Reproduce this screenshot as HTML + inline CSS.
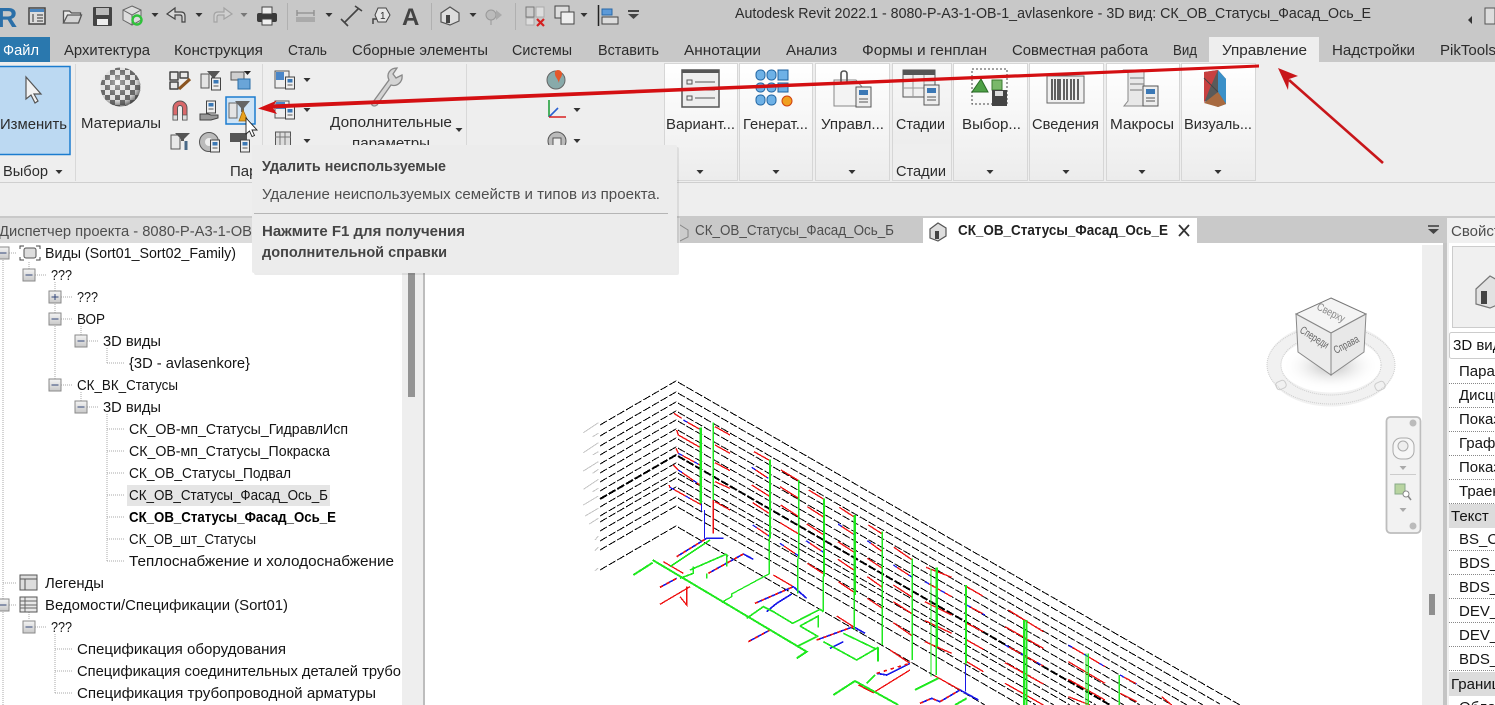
<!DOCTYPE html>
<html lang="ru"><head><meta charset="utf-8"><title>Autodesk Revit</title>
<style>
html,body{margin:0;padding:0;background:#fff;overflow:hidden}
svg{display:block}
text{font-family:"Liberation Sans","DejaVu Sans",sans-serif;font-size:15px;fill:#2c2c2c}
.t text,text.d{fill:#141414}
.b{font-weight:bold}
.g{fill:#4e4e4e}
.w{stroke:#000;stroke-width:1;stroke-dasharray:8 2;fill:none}
.tri{fill:#333}
</style></head><body>
<svg width="1495" height="705" viewBox="0 0 1495 705" xmlns="http://www.w3.org/2000/svg">
<defs>
<linearGradient id="pn" x1="0" y1="0" x2="0" y2="1"><stop offset="0" stop-color="#fff"/><stop offset="1" stop-color="#ececec"/></linearGradient>
<linearGradient id="bx" x1="0" y1="0" x2="0" y2="1"><stop offset="0" stop-color="#f4f4f4"/><stop offset="1" stop-color="#c8c8c8"/></linearGradient>
<radialGradient id="sph" cx=".42" cy=".38" r=".62"><stop offset="0" stop-color="#fff" stop-opacity=".5"/><stop offset=".7" stop-color="#aaa" stop-opacity=".2"/><stop offset="1" stop-color="#444" stop-opacity=".75"/></radialGradient>
<radialGradient id="shd"><stop offset="0" stop-color="#bbb"/><stop offset="1" stop-color="#fff" stop-opacity="0"/></radialGradient>
<pattern id="chk" width="10" height="10" patternUnits="userSpaceOnUse"><rect width="10" height="10" fill="#f0f0f0"/><rect width="5" height="5" fill="#555"/><rect x="5" y="5" width="5" height="5" fill="#555"/></pattern>
<g id="doc"><rect x="-7" y="-10" width="15" height="20" fill="#eee" stroke="#555"/><rect x="-4" y="-7" width="9" height="5" fill="#3b78b5"/><path d="M-4 2h9M-4 5h9" stroke="#555"/></g>
<g id="sd"><rect x="-4.500" y="-6" width="9" height="12" fill="#eee" stroke="#444"/><rect x="-2.500" y="-4" width="5" height="3.500" fill="#3b78b5"/><path d="M-2.500 2h5" stroke="#555"/></g>
<g id="bplus"><rect x="-6" y="-6" width="12" height="12" fill="url(#bx)" stroke="#8a8a8a"/><path d="M-3.500 0h7" stroke="#33477a"/></g>
<path id="dn" d="M-3.500 -2h7L0 2z"/>
</defs>

<!-- base -->
<rect width="1495" height="705" fill="#fff"/>
<rect width="1495" height="62" fill="#c8c8c8"/>
<rect y="62" width="1495" height="154" fill="#eee"/>
<rect y="182" width="1495" height="1" fill="#cfcfcf"/>
<rect y="216" width="1495" height="27" fill="#c9c9c9"/>

<!-- Quick access -->
<text x="-3" y="27" style="font-size:28px;font-weight:bold;fill:#2b6fa8">R</text>
<rect x="29" y="8" width="16" height="16" fill="#ddd" stroke="#444" stroke-width="1.500"/><rect x="30" y="9" width="14" height="3" fill="#4a86c0"/><path d="M33 14v8M37 15h6M37 18h6M37 21h6" stroke="#333"/>
<path d="M63.500 23V11h6l2 2h9v3" fill="#e8e8e8" stroke="#555" stroke-width="1.300"/><path d="M63.500 23l4-8h14l-3 8z" fill="#d4d4d4" stroke="#555" stroke-width="1.300"/>
<rect x="93" y="7" width="19" height="19" fill="#444" rx="1"/><rect x="96" y="8" width="13" height="7" fill="#bbb"/><rect x="97" y="19" width="11" height="6" fill="#eee"/>
<path d="M132 6l9 4v10l-9 5-9-5V10z" fill="#ddd" stroke="#666"/><path d="M123 10l9 5 9-5M132 15v10" stroke="#666" fill="none"/><circle cx="137" cy="20" r="4.500" fill="none" stroke="#2fc23a" stroke-width="2.400"/>
<use href="#dn" x="155" y="15" fill="#333"/>
<path d="M167 14l8-6v4h6q4 0 4 4v6h-3v-5q0-2-2-2h-5v4z" fill="#d6d6d6" stroke="#444" stroke-width="1.200"/>
<use href="#dn" x="199" y="15" fill="#333"/>
<path d="M232 14l-8-6v4h-6q-4 0-4 4v6h3v-5q0-2 2-2h5v4z" fill="#d0d0d0" stroke="#a3a3a3" stroke-width="1.200"/>
<use href="#dn" x="244" y="15" fill="#777"/>
<rect x="257" y="13" width="20" height="9" rx="2" fill="#3a3a3a"/><rect x="262" y="7" width="10" height="7" fill="#eee" stroke="#444"/><rect x="262" y="19" width="10" height="6" fill="#f0f0f0" stroke="#444"/>
<rect x="287" y="3" width="1" height="27" fill="#b0b0b0"/>
<path d="M297 13h17M297 10v6M314 10v6" stroke="#8d8d8d" fill="none" stroke-width="1.300"/><rect x="296" y="17" width="19" height="5" fill="#aaa"/>
<use href="#dn" x="329" y="15" fill="#333"/>
<path d="M344 23l15-15M341 19l7 7M355 6l7 5" stroke="#444" stroke-width="1.600" fill="none"/>
<path d="M373 24v-5h4" stroke="#444" stroke-width="1.500" fill="none"/><path d="M378 8h8l4 7-4 7h-8l-3-7z" fill="#e6e6e6" stroke="#444"/><text x="380" y="19" style="font-size:10px">1</text>
<text x="402" y="25" style="font-size:24px;font-weight:bold;fill:#444">A</text>
<rect x="431" y="3" width="1" height="27" fill="#b0b0b0"/>
<path d="M441 13l9-6 9 6v8l-9 4-9-3z" fill="#ddd" stroke="#555" stroke-width="1.200"/><rect x="446" y="15" width="4" height="8" fill="#444"/>
<use href="#dn" x="473" y="15" fill="#333"/>
<circle cx="491" cy="15" r="5" fill="#bbb" stroke="#999"/><path d="M496 10l6 5-6 5" fill="#aaa"/><path d="M491 20v5" stroke="#999"/>
<rect x="515" y="3" width="1" height="27" fill="#b0b0b0"/>
<rect x="526" y="7" width="8" height="10" fill="#ccc" stroke="#777"/><rect x="536" y="7" width="8" height="10" fill="#ddd" stroke="#aaa"/><rect x="526" y="18" width="8" height="7" fill="#ddd" stroke="#aaa"/><path d="M537 19l7 7M544 19l-7 7" stroke="#d42020" stroke-width="2.200"/>
<rect x="555" y="6" width="14" height="12" fill="#ddd" stroke="#444"/><rect x="561" y="12" width="13" height="12" fill="#eee" stroke="#444"/>
<use href="#dn" x="584" y="15" fill="#333"/>
<path d="M598.500 5v21" stroke="#222" stroke-width="1.500"/><rect x="602" y="9" width="10" height="6" fill="#5d9ad8" stroke="#2868a8"/><rect x="602" y="17" width="16" height="7" fill="#ddd" stroke="#444"/>
<path d="M628 11h11" stroke="#444" stroke-width="2"/><path d="M628 14h11l-5.500 5z" fill="#444"/>

<text x="735" y="18" textLength="636" lengthAdjust="spacingAndGlyphs">Autodesk Revit 2022.1 - 8080-Р-А3-1-ОВ-1_avlasenkore - 3D вид: СК_ОВ_Статусы_Фасад_Ось_Е</text>
<path d="M1472 16l-4 4 4 4z" fill="#333"/><rect x="1485" y="8" width="10" height="16" fill="#ddd" stroke="#555"/>

<!-- tabs -->
<rect y="37" width="50" height="25" fill="#2a78ae"/>
<text x="3" y="55" textLength="36" lengthAdjust="spacingAndGlyphs" style="fill:#fff">Файл</text>
<rect x="1209" y="37" width="110" height="25" fill="#eee"/>
<text x="64" y="55" textLength="86" lengthAdjust="spacingAndGlyphs">Архитектура</text>
<text x="174" y="55" textLength="89" lengthAdjust="spacingAndGlyphs">Конструкция</text>
<text x="288" y="55" textLength="39" lengthAdjust="spacingAndGlyphs">Сталь</text>
<text x="352" y="55" textLength="136" lengthAdjust="spacingAndGlyphs">Сборные элементы</text>
<text x="512" y="55" textLength="60" lengthAdjust="spacingAndGlyphs">Системы</text>
<text x="598" y="55" textLength="61" lengthAdjust="spacingAndGlyphs">Вставить</text>
<text x="684" y="55" textLength="77" lengthAdjust="spacingAndGlyphs">Аннотации</text>
<text x="786" y="55" textLength="51" lengthAdjust="spacingAndGlyphs">Анализ</text>
<text x="862" y="55" textLength="125" lengthAdjust="spacingAndGlyphs">Формы и генплан</text>
<text x="1012" y="55" textLength="136" lengthAdjust="spacingAndGlyphs">Совместная работа</text>
<text x="1173" y="55" textLength="24" lengthAdjust="spacingAndGlyphs">Вид</text>
<text x="1222" y="55" textLength="85" lengthAdjust="spacingAndGlyphs">Управление</text>
<text x="1332" y="55" textLength="83" lengthAdjust="spacingAndGlyphs">Надстройки</text>
<text x="1440" y="55" textLength="56" lengthAdjust="spacingAndGlyphs">PikTools</text>

<!-- ribbon left -->
<rect x="-2" y="66.500" width="72" height="88" fill="#bcd9f2" stroke="#1b7ccf" stroke-width="1.500"/>
<path d="M26 77v22l5-4 4 8 3-2-4-7h7z" fill="#f2f2f2" stroke="#555" stroke-width="1.200"/>
<text x="0" y="129" textLength="67" lengthAdjust="spacingAndGlyphs">Изменить</text>
<text x="3" y="176" textLength="45" lengthAdjust="spacingAndGlyphs">Выбор</text>
<use href="#dn" x="59" y="172" class="tri"/>
<rect x="75" y="64" width="1" height="117" fill="#d8d8d8"/>
<rect x="262" y="64" width="1" height="117" fill="#d8d8d8"/>
<rect x="466" y="64" width="1" height="117" fill="#d8d8d8"/>
<ellipse cx="120.500" cy="87" rx="20" ry="19.500" fill="url(#chk)"/>
<ellipse cx="120.500" cy="87" rx="20" ry="19.500" fill="url(#sph)"/>
<text x="81" y="128" textLength="80" lengthAdjust="spacingAndGlyphs">Материалы</text>

<!-- small icons row 1 -->
<path d="M170 72h8v8h-8zM180 72h8v6h-8zM170 82h8v7h-8z" fill="#e8e8e8" stroke="#444" stroke-width="1.500" stroke-linejoin="round"/><path d="M179 89l11-10" stroke="#8a5420" stroke-width="3.200"/>
<path d="M201 74h8v14h-8z" fill="#e4e4e4" stroke="#555"/><path d="M207 71h13l-5 6v2h-3v-2z" fill="#555"/><use href="#sd" x="216" y="84"/>
<path d="M231 72h13v8h-13z" fill="#cfcfcf" stroke="#555"/><rect x="238" y="79" width="12" height="10" fill="#6aa5d8" stroke="#2a6ea8"/><path d="M244 71h7l-3.500 4z" fill="#222"/>
<!-- row 2 -->
<path d="M173 120v-12a7 7 0 0 1 14 0v12h-4.500v-12a2.500 2.500 0 0 0-5 0v12z" fill="#d9686a" stroke="#555"/><rect x="173" y="115" width="4.500" height="5" fill="#ddd" stroke="#555" stroke-width=".7"/><rect x="182.500" y="115" width="4.500" height="5" fill="#ddd" stroke="#555" stroke-width=".7"/>
<use href="#sd" x="211" y="107"/><path d="M200 114h8l3 1h7v3l-7 2h-11z" fill="#999" stroke="#444"/>
<rect x="226" y="97" width="29" height="27" fill="#cfe4f6" stroke="#1b7ccf" stroke-width="1.500"/>
<path d="M229 103h8v15h-8z" fill="#e4e4e4" stroke="#666"/><path d="M235 101h15l-6 7v4h-3v-4z" fill="#666"/><path d="M243 110l5 11h-9z" fill="#e9a21c" stroke="#a36a10" stroke-width=".8"/>
<!-- row 3 -->
<path d="M171 135h9v14h-9z" fill="#e8e8e8" stroke="#555"/><path d="M175 133h15l-6 6v2h-3v-2z" fill="#555"/><path d="M186 141v9" stroke="#4a6a88" stroke-width="3"/>
<circle cx="209" cy="142" r="9.500" fill="#bbb" stroke="#555"/><circle cx="209" cy="142" r="4" fill="#eee"/><use href="#sd" x="215" y="146"/>
<rect x="230" y="133" width="17" height="9" fill="#555"/><use href="#sd" x="245" y="146"/>
<!-- column 2 -->
<rect x="275" y="71" width="14" height="17" fill="#eee" stroke="#555"/><rect x="276" y="72" width="8" height="8" fill="#4a86c8"/><use href="#sd" x="290" y="83"/><use href="#dn" x="307" y="80" class="tri"/>
<rect x="275" y="101" width="14" height="17" fill="#eee" stroke="#555"/><rect x="276" y="102" width="9" height="7" fill="#4a86c8"/><use href="#sd" x="290" y="113"/><use href="#dn" x="307" y="110" class="tri"/>
<rect x="275.500" y="132" width="15" height="14" fill="#ddd" stroke="#555"/><path d="M275 137h16M280 132v14M285 132v14" stroke="#777"/><use href="#dn" x="307" y="141" class="tri"/>
<path d="M373 102l16-22c-3-6 1-12 8-12l-4 6 3 4 6-3c1 7-5 12-11 10l-14 20q-3 2-5 0-1-2 1-3z" fill="#d4d4d4" stroke="#888" stroke-width="1.300"/>
<text x="330" y="127" textLength="122" lengthAdjust="spacingAndGlyphs">Дополнительные</text>
<text x="352" y="148" textLength="78" lengthAdjust="spacingAndGlyphs">параметры</text>
<use href="#dn" x="459" y="130" class="tri"/>
<circle cx="556" cy="80" r="9" fill="#8aa" stroke="#666"/><path d="M558 70a4 4 0 0 1 4 4c0 3-3 5-3 9-1-4-4-6-4-9a3 3 0 0 1 3-4z" fill="#e4572a"/>
<path d="M549 100v17" fill="none" stroke="#22a03c" stroke-width="1.600"/><path d="M549 117l9-9" stroke="#2a5fd0" stroke-width="1.600"/><path d="M549 117h17" stroke="#d82020" stroke-width="1.500"/>
<use href="#dn" x="577" y="110" class="tri"/>
<circle cx="557" cy="141" r="9" fill="#bbb" stroke="#555"/><rect x="553" y="138" width="8" height="8" fill="#eee" stroke="#555"/>
<use href="#dn" x="577" y="141" class="tri"/>

<!-- right panels -->
<g fill="url(#pn)" stroke="#d6d6d6">
<rect x="664.500" y="63.500" width="73" height="117"/><rect x="739.500" y="63.500" width="73" height="117"/><rect x="815.500" y="63.500" width="74" height="117"/>
<rect x="953.500" y="63.500" width="74" height="117"/><rect x="1029.500" y="63.500" width="74" height="117"/><rect x="1106.500" y="63.500" width="73" height="117"/><rect x="1181.500" y="63.500" width="74" height="117"/>
</g>
<rect x="892.500" y="63.500" width="59" height="117" fill="#eee" stroke="#d6d6d6"/>
<rect x="893" y="64" width="58" height="80" fill="url(#pn)" opacity=".6"/>

<rect x="682" y="70" width="37" height="37" fill="#eee" stroke="#555" stroke-width="1.500"/><rect x="682" y="70" width="37" height="3" fill="#555"/><path d="M687 80h5v4h-5zM687 96h5v4h-5zM695 82h20M695 98h20M694 90h21" stroke="#555" fill="none"/>
<g stroke="#1f63a0" fill="#6eb1e6"><rect x="756" y="70" width="9" height="10" rx="4"/><rect x="767" y="70" width="9" height="10" rx="4"/><rect x="778" y="70" width="10" height="10"/><rect x="756" y="83" width="9" height="9" rx="4"/><rect x="767" y="83" width="9" height="9" rx="4"/><rect x="778" y="83" width="10" height="9"/><rect x="756" y="95" width="9" height="10" rx="4"/><rect x="767" y="95" width="9" height="10" rx="4"/></g><circle cx="787" cy="101" r="5" fill="#f0a020" stroke="#d04010"/>
<path d="M834 80h22l7 8v18h-29z" fill="#f3f3f3" stroke="#888"/><path d="M841 82V74q0-3 3-3t3 3v9" fill="none" stroke="#555" stroke-width="1.600"/><use href="#doc" x="863" y="97"/>
<rect x="903" y="70" width="32" height="27" fill="#f0f0f0" stroke="#555"/><rect x="903" y="70" width="32" height="5" fill="#555"/><path d="M903 81h32M903 88h32M913 75v22M924 75v22" stroke="#999"/><use href="#doc" x="931" y="95"/>
<rect x="972" y="69" width="35" height="35" fill="none" stroke="#444" stroke-dasharray="2 2"/><path d="M981 79l-9 13h16z" fill="#4ea046" stroke="#2a6a26"/><rect x="992" y="80" width="10" height="10" fill="#7ab86a" stroke="#3a7a30"/><rect x="992" y="90" width="15" height="16" fill="#444"/><rect x="995" y="91" width="8" height="5" fill="#ddd"/>
<rect x="1047" y="76" width="37" height="27" fill="#f0f0f0" stroke="#666"/><path d="M1052 79v21M1055 79v21M1058 79v21M1060 79v21M1064 79v21M1067 79v21M1071 79v21M1074 79v21M1078 79v21" stroke="#222" stroke-width="1.400"/>
<path d="M1124 70h20v32h8l-2 4h-26l4-5v-28z" fill="#e8e8e8" stroke="#888"/><path d="M1130 78h14M1130 84h14M1130 90h12" stroke="#777"/><use href="#doc" x="1150" y="96"/>
<path d="M1204 72l14 -2 8 9v25l-8 3-14-6z" fill="#5a5a5a"/><path d="M1204 72l14-2-8 18-6 15z" fill="#c84040"/><path d="M1218 70l8 9v25l-8-12z" fill="#3a90c8"/><path d="M1204 103l14-11 8 12-8 3z" fill="#a86a40"/><path d="M1204 78l14 14" stroke="#444"/>
<text x="666" y="129" textLength="69" lengthAdjust="spacingAndGlyphs">Вариант...</text>
<text x="743" y="129" textLength="65" lengthAdjust="spacingAndGlyphs">Генерат...</text>
<text x="821" y="129" textLength="63" lengthAdjust="spacingAndGlyphs">Управл...</text>
<text x="896" y="129" textLength="49" lengthAdjust="spacingAndGlyphs">Стадии</text>
<text x="962" y="129" textLength="59" lengthAdjust="spacingAndGlyphs">Выбор...</text>
<text x="1032" y="129" textLength="67" lengthAdjust="spacingAndGlyphs">Сведения</text>
<text x="1110" y="129" textLength="64" lengthAdjust="spacingAndGlyphs">Макросы</text>
<text x="1184" y="129" textLength="68" lengthAdjust="spacingAndGlyphs">Визуаль...</text>
<text x="896" y="176" textLength="50" lengthAdjust="spacingAndGlyphs">Стадии</text>
<g class="tri"><use href="#dn" x="700" y="172"/><use href="#dn" x="776" y="172"/><use href="#dn" x="852" y="172"/><use href="#dn" x="990" y="172"/><use href="#dn" x="1066" y="172"/><use href="#dn" x="1142" y="172"/><use href="#dn" x="1218" y="172"/></g>
<text x="230" y="176">Пар</text>

<!-- View tabs -->
<rect x="923" y="218" width="274" height="25" fill="#fff"/>
<path d="M672 231l8-6 8 5v7l-8 4-8-3z" fill="#ccc" stroke="#888"/>
<text x="695" y="235" textLength="199" lengthAdjust="spacingAndGlyphs" class="g">СК_ОВ_Статусы_Фасад_Ось_Б</text>
<path d="M930 229l8-6 8 5v8l-8 5-8-3z" fill="#ddd" stroke="#555" stroke-width="1.200"/><rect x="935" y="231" width="4" height="8" fill="#444"/>
<text x="958" y="235" textLength="210" lengthAdjust="spacingAndGlyphs" class="b" style="fill:#222">СК_ОВ_Статусы_Фасад_Ось_Е</text>
<path d="M1179 225l10 11M1189 225l-10 11" stroke="#333" stroke-width="1.800"/>
<path d="M1428 226h11" stroke="#444" stroke-width="1.600"/><path d="M1428 229h11l-5.500 5z" fill="#444"/>

<!-- Project browser -->
<rect x="0" y="218" width="680" height="25" fill="#dcdcdc"/>
<rect x="424" y="218" width="253" height="25" fill="#c9c9c9"/>
<text x="-1" y="236" textLength="253" lengthAdjust="spacingAndGlyphs" class="g">Диспетчер проекта - 8080-Р-А3-1-ОВ</text>
<rect x="402" y="243" width="21" height="462" fill="#eee"/>
<rect x="423" y="243" width="2" height="462" fill="#bdbdbd"/>
<rect x="408" y="270" width="7" height="127" fill="#949494"/>

<!-- tree lines -->
<g stroke="#a8a8a8" stroke-dasharray="1 1" fill="none">
<path d="M3 260V606M29 262V282M55 282V385M81 326V341M107 348V363M81 392V407M107 414V561M29 612V620M55 634V693M3 612V705"/>
<path d="M9 253h8M3 583h14M35 275h12M61 297h12M61 319h12M61 385h12M87 341h12M107 363h18M87 407h12M107 429h18M107 451h18M107 473h18M107 495h18M107 517h18M107 539h18M107 561h18M9 605h8M35 627h12M55 649h18M55 671h18M55 693h18"/>
</g>
<g><use href="#bplus" x="3" y="253"/><use href="#bplus" x="29" y="275"/><use href="#bplus" x="55" y="297"/><path d="M55 294v6" stroke="#33477a"/><use href="#bplus" x="55" y="319"/><use href="#bplus" x="81" y="341"/><use href="#bplus" x="55" y="385"/><use href="#bplus" x="81" y="407"/><use href="#bplus" x="3" y="605"/><use href="#bplus" x="29" y="627"/></g>
<path d="M20 249v-3h4M36 246h4v3M40 257v3h-4M24 260h-4v-3" stroke="#444" fill="none"/><rect x="24" y="248" width="12" height="10" rx="2" fill="#ddd" stroke="#555"/>
<rect x="20" y="575" width="17" height="15" fill="#ddd" stroke="#555"/><path d="M20 579h17M25 579v11" stroke="#555"/>
<rect x="20" y="597" width="17" height="15" fill="#e8e8e8" stroke="#555"/><path d="M20 601h17M20 605h17M20 608h17M25 597v15" stroke="#666"/>
<rect x="127" y="485" width="203" height="21" fill="#e5e5e5"/>
<g class="t">
<text x="45" y="258" textLength="191" lengthAdjust="spacingAndGlyphs">Виды (Sort01_Sort02_Family)</text>
<text x="51" y="280" textLength="21" lengthAdjust="spacingAndGlyphs">???</text>
<text x="77" y="302" textLength="21" lengthAdjust="spacingAndGlyphs">???</text>
<text x="77" y="324" textLength="28" lengthAdjust="spacingAndGlyphs">ВОР</text>
<text x="103" y="346" textLength="58" lengthAdjust="spacingAndGlyphs">3D виды</text>
<text x="129" y="368" textLength="121" lengthAdjust="spacingAndGlyphs">{3D - avlasenkore}</text>
<text x="77" y="390" textLength="101" lengthAdjust="spacingAndGlyphs">СК_ВК_Статусы</text>
<text x="103" y="412" textLength="58" lengthAdjust="spacingAndGlyphs">3D виды</text>
<text x="129" y="434" textLength="219" lengthAdjust="spacingAndGlyphs">СК_ОВ-мп_Статусы_ГидравлИсп</text>
<text x="129" y="456" textLength="201" lengthAdjust="spacingAndGlyphs">СК_ОВ-мп_Статусы_Покраска</text>
<text x="129" y="478" textLength="162" lengthAdjust="spacingAndGlyphs">СК_ОВ_Статусы_Подвал</text>
<text x="129" y="500" textLength="199" lengthAdjust="spacingAndGlyphs">СК_ОВ_Статусы_Фасад_Ось_Б</text>
<text x="129" y="522" textLength="207" lengthAdjust="spacingAndGlyphs" class="b" style="fill:#000">СК_ОВ_Статусы_Фасад_Ось_Е</text>
<text x="129" y="544" textLength="127" lengthAdjust="spacingAndGlyphs">СК_ОВ_шт_Статусы</text>
<text x="129" y="566" textLength="265" lengthAdjust="spacingAndGlyphs">Теплоснабжение и холодоснабжение</text>
<text x="45" y="588" textLength="59" lengthAdjust="spacingAndGlyphs">Легенды</text>
<text x="45" y="610" textLength="243" lengthAdjust="spacingAndGlyphs">Ведомости/Спецификации (Sort01)</text>
<text x="51" y="632" textLength="21" lengthAdjust="spacingAndGlyphs">???</text>
<text x="77" y="654" textLength="209" lengthAdjust="spacingAndGlyphs">Спецификация оборудования</text>
<text x="77" y="676" textLength="324" lengthAdjust="spacingAndGlyphs">Спецификация соединительных деталей трубо</text>
<text x="77" y="698" textLength="299" lengthAdjust="spacingAndGlyphs">Спецификация трубопроводной арматуры</text>
</g>

<!-- Drawing: levels -->
<g shape-rendering="crispEdges">
<g class="w">
<path d="M600 425L676 381L1240 705"/>
<path d="M600 436L676 392L1220 704"/>
<path d="M600 446L676 402L1203 705"/>
<path d="M600 455L676 411L1187 705"/>
<path d="M600 464L676 420L1172 705"/>
<path d="M600 473L676 429L1156 705"/>
<path d="M600 482L676 438L1140 705"/>
<path d="M600 491L676 447L1124 705"/>
<path d="M600 499L676 455L1110 705" style="stroke-width:2"/>
<path d="M600 507L676 463L1096 705"/>
<path d="M600 516L676 472L1080 705"/>
<path d="M600 522L676 478L1070 705"/>
<path d="M600 531L676 487L1054 705"/>
<path d="M600 541L676 497L1036 705"/>
<path d="M600 550L676 506L1020 705"/>
<path d="M600 570L676 526L985 705"/>
</g>
<g transform="translate(570 370) scale(.33333)" fill="none" stroke-width="3">
<!-- red branches -->
<g stroke="#ee1111" stroke-width="4">
<path d="M312 130L335 145M340 150L390 178M320 180L325 195L390 232M318 235L325 250L390 285M310 285L325 300L390 345M297 345L300 352L395 405M435 170L480 195M435 225L480 250M435 278L480 302M435 335L480 355M435 395L480 420M552 245L600 272M545 292L595 325M545 345L597 378M548 398L597 430M548 465L600 500M633 300L686 332M630 350L686 385M632 405L686 440M630 458L686 492M630 520L686 558M716 360L762 388M712 410L762 442M710 462L762 495M708 512L762 548M712 580L762 612M808 412L854 442M804 462L854 495M804 515L854 548M804 568L854 602M805 635L854 668M895 465L937 492M892 512L937 545M892 565L937 595M892 620L937 652M892 685L937 715M972 532L1027 570M970 585L1027 622M970 645L1027 682M970 695L1027 732M970 758L1027 798M1068 592L1145 622M1065 635L1145 680M1065 695L1145 735M1065 752L1145 790M1065 815L1145 850M1190 650L1238 678M1190 705L1245 735M1190 760L1240 785M1190 810L1240 838M1190 875L1240 905M1315 720L1420 785M1305 770L1420 835M1305 825L1420 888M1305 878L1420 942M1305 940L1420 1005M1495 825L1605 890M1495 875L1605 940M1495 928L1605 990M1495 980L1560 1005M1650 915L1700 942M1650 970L1700 995M1775 980L1805 1005"/>
<path d="M430 390V490M280 575L340 610M350 650V705L330 680M270 703L360 650M610 615L670 650M800 738L850 770M865 945L910 968L1020 900M960 840L1020 880M1095 918L1185 968"/>
</g>
<!-- blue overlays -->
<g stroke="#1818e8" stroke-width="4" stroke-dasharray="14 40">
<path d="M340 150L390 178M325 250L390 285M325 300L390 345M300 352L395 405M545 292L595 325M548 465L600 500M630 520L686 558M708 512L762 548M804 462L854 495M892 512L937 545M970 585L1027 622M1065 635L1145 680M1190 705L1245 735M1305 825L1420 888M1495 825L1605 890M1650 915L1700 942"/>
</g>
<path d="M403 420V505M395 400V425M1187 885V965" stroke="#1818e8"/>
<g stroke="#1818e8" stroke-width="5"><path d="M320 560L410 505L460 505M415 610L520 552L550 568M270 652L320 625M535 815L600 780M555 700L670 650L710 685M590 725L620 700L665 672M740 810L850 770L885 790M780 835L820 815M920 910L950 915L1020 880M1050 1000L1085 985L1110 995L1170 960L1225 990"/></g>
<g stroke="#ee1111" stroke-width="5" stroke-dasharray="10 12"><path d="M320 560L410 505M415 610L520 552M270 652L320 625M535 815L600 780M555 700L670 650M740 810L850 770M920 910L1020 880M1050 1000L1085 985L1110 995L1170 960"/></g>
<!-- green -->
<g stroke="#1fe81f" stroke-width="4">
<path d="M392 172V400" stroke-width="7"/><path d="M430 157V390"/>
<path d="M600 268V505" stroke-width="7"/><path d="M598 505V610"/>
<path d="M686 330V565M683 565V670"/>
<path d="M762 385V620" stroke-width="7"/><path d="M760 620V725"/>
<path d="M854 435V675" stroke-width="7"/><path d="M853 675V780"/>
<path d="M937 485V825M1027 565V870M1083 595V920"/>
<path d="M1100 592V830" stroke-width="7"/><path d="M1099 830V915"/>
<path d="M1188 645V880" stroke-width="7"/>
<path d="M1362 750V1005" stroke-width="7"/><path d="M1370 750V1005" stroke-width="6"/>
<path d="M1548 850V1005M1555 850V1005M1648 915V1005"/>
<path d="M190 615L248 578M248 570L710 845L680 865" stroke-width="6"/>
<path d="M455 697L485 680V672L600 610"/>
<path d="M530 745L580 710L610 725L668 760L750 718L760 725M690 768L745 738V772M690 768L745 800M760 815L860 870L925 832M820 790L920 838M680 830L740 800" stroke-width="5"/>
<path d="M300 590L420 510M470 552V590M330 625L370 610V590M360 600L470 552M410 625V610" stroke-width="5"/>
<path d="M790 975L855 933L985 1005M1035 960L1105 925M890 940L915 915M1155 1005L1190 985" stroke-width="6"/>
<path d="M924 832V875" stroke-width="5"/>
</g>
<!-- labels on left -->
<g stroke="#c4c4c4" stroke-width="3"><path d="M40 188L85 158M68 200L85 190M40 248L85 218M68 255L85 245M40 303L85 275M68 310L85 298M40 358L85 328M68 365L85 355M40 405L85 378M45 438L85 415M58 462L85 445M75 510L85 498M75 542L85 532M75 602L85 594"/></g>
</g>
</g>

<!-- View cube -->
<ellipse cx="1331" cy="365" rx="57" ry="34.500" fill="none" stroke="#f1f1f1" stroke-width="14"/>
<ellipse cx="1331" cy="365" rx="64" ry="39" fill="none" stroke="#ccc" stroke-dasharray="1 1"/>
<ellipse cx="1331" cy="365" rx="50" ry="30" fill="none" stroke="#ccc" stroke-dasharray="1 1"/>
<ellipse cx="1331" cy="366" rx="48" ry="24" fill="url(#shd)"/>
<path d="M1331 298L1366 314L1331 333L1296 314z" fill="#f4f4f4" stroke="#777"/>
<path d="M1296 314L1331 333V375L1298 352z" fill="#ececec" stroke="#888"/>
<path d="M1366 314L1331 333V375L1364 352z" fill="#e8e8e8" stroke="#888"/>
<text transform="translate(1316 309) rotate(27)" textLength="30" lengthAdjust="spacingAndGlyphs" style="font-size:11px;fill:#888">Сверху</text>
<text transform="translate(1299 332) rotate(32)" textLength="32" lengthAdjust="spacingAndGlyphs" style="font-size:11px;fill:#666">Спереди</text>
<text transform="translate(1336 354) rotate(-28)" textLength="27" lengthAdjust="spacingAndGlyphs" style="font-size:11px;fill:#666">Справа</text>
<rect x="1276" y="381" width="10" height="8" rx="3" fill="none" stroke="#ccc" transform="rotate(-25 1281 385)"/>
<rect x="1375" y="382" width="10" height="8" rx="3" fill="none" stroke="#ccc" transform="rotate(-25 1380 386)"/>

<!-- scrollbar + nav bar -->
<rect x="1422" y="245" width="21" height="460" fill="#eee"/>
<rect x="1429" y="594" width="6" height="21" fill="#8f8f8f"/>
<rect x="1443" y="243" width="4" height="462" fill="#c4c4c4"/>
<rect x="1386.500" y="417" width="34" height="116" rx="4" fill="#f2f2f2" stroke="#bdbdbd" stroke-width="1.800"/>
<circle cx="1413" cy="423" r="3.500" fill="#bbb"/><circle cx="1413" cy="526" r="3.500" fill="#bbb"/>
<rect x="1393" y="438" width="21" height="21" rx="8" fill="#f6f6f6" stroke="#aaa"/><circle cx="1403" cy="446" r="5" fill="#eee" stroke="#aaa"/>
<use href="#dn" x="1403" y="468" fill="#aaa"/>
<rect x="1390" y="474" width="26" height="1" fill="#ccc"/>
<rect x="1395" y="484" width="10" height="10" fill="#b8d4a0" stroke="#8a8"/><circle cx="1406" cy="494" r="3" fill="#fff" stroke="#888"/><path d="M1408 496l3 4" stroke="#888" stroke-width="1.500"/>
<use href="#dn" x="1403" y="510" fill="#aaa"/>

<!-- Properties -->
<rect x="1447" y="218" width="48" height="487" fill="#f0f0f0"/>
<text x="1451" y="236" class="g">Свойства</text>
<rect x="1449" y="243" width="46" height="462" fill="#fff"/>
<rect x="1452.500" y="246.500" width="50" height="81" fill="#f0f0f0" stroke="#ccc"/>
<path d="M1476 289l14-13 14 8v18l-14 6-14-4z" fill="#e2e2e2" stroke="#777" stroke-width="1.200"/><rect x="1481" y="291" width="6" height="13" fill="#444"/>
<rect x="1449.500" y="332.500" width="50" height="26" rx="2" fill="#fff" stroke="#ccc"/>
<text x="1453" y="350" class="d">3D вид</text>
<g stroke="#888" stroke-dasharray="1 1"><path d="M1449 383.500h46M1449 407.500h46M1449 431.500h46M1449 455.500h46M1449 479.500h46M1449 503.500h46M1449 550.500h46M1449 574.500h46M1449 598.500h46M1449 622.500h46M1449 646.500h46M1449 670.500h46"/></g>
<rect x="1449" y="504" width="46" height="24" fill="#dcdcdc"/>
<rect x="1449" y="672" width="46" height="24" fill="#dcdcdc"/>
<g class="t">
<text x="1459" y="376">Параметры</text>
<text x="1459" y="400">Дисциплина</text>
<text x="1459" y="424">Показать</text>
<text x="1459" y="448">Графика</text>
<text x="1459" y="472">Показать</text>
<text x="1459" y="496">Траектория</text>
<text x="1451" y="521">Текст</text>
<text x="1459" y="544">BS_Статус</text>
<text x="1459" y="568">BDS_Имя</text>
<text x="1459" y="592">BDS_Имя</text>
<text x="1459" y="616">DEV_Имя</text>
<text x="1459" y="640">DEV_Имя</text>
<text x="1459" y="664">BDS_Имя</text>
<text x="1451" y="689">Границы</text>
<text x="1459" y="712">Область</text>
</g>

<!-- Tooltip -->
<rect x="254" y="147" width="425" height="128" rx="2" fill="#000" opacity=".08"/>
<rect x="252" y="145" width="425" height="128" rx="2" fill="#ececec"/>
<text x="262" y="171" textLength="184" lengthAdjust="spacingAndGlyphs" class="b" style="fill:#444">Удалить неиспользуемые</text>
<text x="262" y="199" textLength="398" lengthAdjust="spacingAndGlyphs" class="g">Удаление неиспользуемых семейств и типов из проекта.</text>
<rect x="254" y="213" width="414" height="1" fill="#b5b5b5"/>
<text x="262" y="236" textLength="203" lengthAdjust="spacingAndGlyphs" class="b" style="fill:#444">Нажмите F1 для получения</text>
<text x="262" y="257" textLength="185" lengthAdjust="spacingAndGlyphs" class="b" style="fill:#444">дополнительной справки</text>

<!-- cursor -->
<path d="M246 118v16l3.500-3 2.500 5.500 2.500-1-2.500-5.500h5z" fill="#fff" stroke="#222" stroke-width=".9"/>

<!-- red arrows -->
<path d="M1259 64.500L272 104.500L272 108.500L1259 67.500z" fill="#d40f12"/>
<path d="M258 108.500L277 100.500L272 106.500L277 114z" fill="#d40f12"/>
<path d="M1383 163L1289 80" stroke="#c8161a" stroke-width="2.600" fill="none"/>
<path d="M1278 68L1298 76L1289 79L1288 90z" fill="#c8161a"/>
</svg>
</body></html>
